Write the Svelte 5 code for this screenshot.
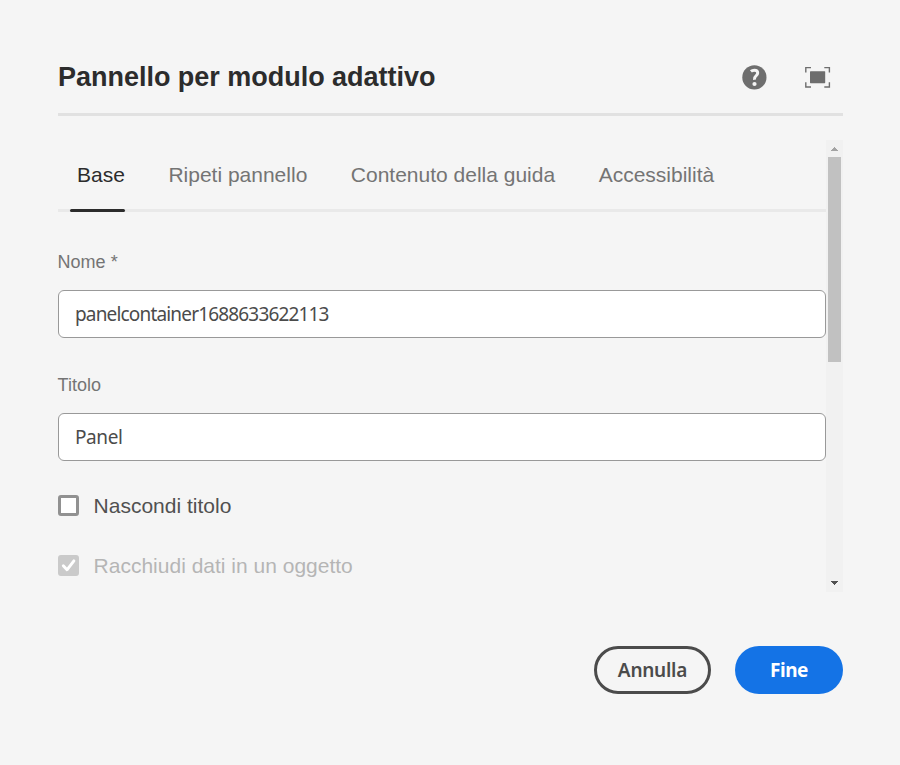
<script>
  const tabs = ['Base', 'Ripeti pannello', 'Contenuto della guida', 'Accessibilità'];
  let active = $state(0);
  let name = $state('panelcontainer1688633622113');
  let title = $state('Panel');
</script>

<main class="dialog">
  <header>
    <h1>Pannello per modulo adattivo</h1>
    <div class="actions">
      <svg width="26" height="26" viewBox="0 0 26 26" aria-label="Aiuto">
        <circle cx="13.4" cy="13.4" r="12.1" fill="#6e6e6e" />
        <path d="M9.9 7.4Q11.3 6.2 13.3 6.2Q16.7 6.2 16.7 9.1Q16.7 10.5 15 11.9Q13.2 13.3 13.5 15.8" fill="none" stroke="#f5f5f5" stroke-width="3" />
        <circle cx="13.5" cy="20" r="2.1" fill="#f5f5f5" />
      </svg>
      <svg width="26" height="22" viewBox="0 0 26 22" aria-label="Schermo intero">
        <path d="M.8 6.4V1.6H6M19.3 1.6H24.4V6.4M24.4 16.2V21H19.3M6 21H.8V16.2" fill="none" stroke="#6e6e6e" stroke-width="1.4" />
        <rect x="5" y="5.2" width="15.2" height="12" rx=".6" fill="#6e6e6e" />
      </svg>
    </div>
  </header>

  <section class="body">
    <div class="content">
      <nav>
        {#each tabs as tab, i}
          <button class="tab" class:active={active === i} onclick={() => (active = i)}>{tab}</button>
        {/each}
      </nav>
      <label class="field">
        <span class="caption">Nome *</span>
        <input type="text" class="name" bind:value={name} />
      </label>
      <label class="field second">
        <span class="caption">Titolo</span>
        <input type="text" class="title" bind:value={title} />
      </label>
      <div class="check">
        <span class="box"></span>
        <span>Nascondi titolo</span>
      </div>
      <div class="check disabled">
        <span class="box">
          <svg width="21" height="21" viewBox="0 0 21 21"><path d="M5.3 10.8L9 14.8L15.9 5.8" fill="none" stroke="#fff" stroke-width="2.9" stroke-linecap="round" stroke-linejoin="round" /></svg>
        </span>
        <span>Racchiudi dati in un oggetto</span>
      </div>
    </div>
    <div class="scrollbar">
      <svg width="17" height="17" viewBox="0 0 17 17" shape-rendering="crispEdges"><path d="M5 11L8.5 7L12 11Z" fill="#a3a3a3" /></svg>
      <div class="thumb"></div>
      <svg class="down" width="17" height="17" viewBox="0 0 17 17" shape-rendering="crispEdges"><path d="M5 6L8.5 10L12 6Z" fill="#505050" /></svg>
    </div>
  </section>

  <footer>
    <button class="cancel">Annulla</button>
    <button class="done">Fine</button>
  </footer>
</main>

<style>
  :global(body) { margin: 0; background: #f5f5f5; }
  * { box-sizing: border-box; }
  .dialog {
    height: 765px;
    padding: 41px 57px 0 58px;
    overflow: hidden;
    background: #f5f5f5;
    font-family: "Liberation Sans", Arial, sans-serif;
  }
  header {
    display: flex;
    justify-content: space-between;
    height: 75px;
    border-bottom: 3px solid #e1e1e1;
  }
  h1 { margin: 0; color: #2c2c2c; font-size: 27px; line-height: 72px; letter-spacing: -.02px; white-space: nowrap; }
  .actions { display: flex; align-items: center; gap: 38px; padding-right: 12px; }
  .body { display: flex; height: 452px; margin-top: 24px; }
  .content { width: 768px; }
  nav {
    display: flex;
    gap: 43.5px;
    height: 72px;
    padding-left: 19px;
    border-bottom: 3px solid #e9e9e9;
  }
  button { font: inherit; border: 0; padding: 0; white-space: nowrap; }
  .tab {
    position: relative;
    height: 72px;
    padding-bottom: 2px;
    background: none;
    color: #747474;
    font-size: 21px;
    line-height: 70px;
  }
  .active { color: #2c2c2c; }
  .active::after {
    content: "";
    position: absolute;
    left: -7px;
    right: 0;
    bottom: 0;
    height: 3px;
    border-radius: 1.5px;
    background: #2c2c2c;
  }
  .field { display: block; padding-top: 38px; }
  .second { padding-top: 35px; }
  .caption { display: block; height: 40px; margin-left: -.4px; color: #747474; font-size: 18px; line-height: 24px; }
  input {
    display: block;
    width: 768px;
    height: 48px;
    padding: 0 16px 1px;
    border: 1px solid #999;
    border-radius: 6px;
    outline: 0;
    background: #fff;
    color: #4b4b4b;
    font: 19px "Noto Sans", sans-serif;
  }
  .name { letter-spacing: -.83px; }
  .title { letter-spacing: -.4px; }
  .check { display: flex; align-items: center; height: 60px; gap: 14.6px; color: #505050; font-size: 21px; }
  .second + .check { margin-top: 15px; }
  .box { width: 21px; height: 21px; margin-bottom: 1px; border: 3px solid #919191; border-radius: 3px; background: #fff; }
  .disabled { color: #b5b5b5; }
  .disabled .box { border: 0; background: #cacaca; }
  .box svg { display: block; }
  .scrollbar { display: flex; flex-direction: column; width: 17px; background: #f1f1f1; }
  .scrollbar svg { display: block; flex: none; }
  .thumb { width: 13px; height: 205px; margin-left: 2px; background: #c1c1c1; }
  .down { margin-top: auto; }
  footer { display: flex; justify-content: flex-end; gap: 24px; margin-top: 54px; }
  footer button { height: 48px; border-radius: 24px; font: 600 19px/42px "Noto Sans", sans-serif; letter-spacing: -.25px; }
  .cancel { width: 117px; border: 3px solid #4b4b4b; background: transparent; color: #4b4b4b; }
  .done { width: 108px; padding-bottom: 1px; background: #1473e6; color: #fff; font-weight: 700; letter-spacing: -.5px; }
</style>
